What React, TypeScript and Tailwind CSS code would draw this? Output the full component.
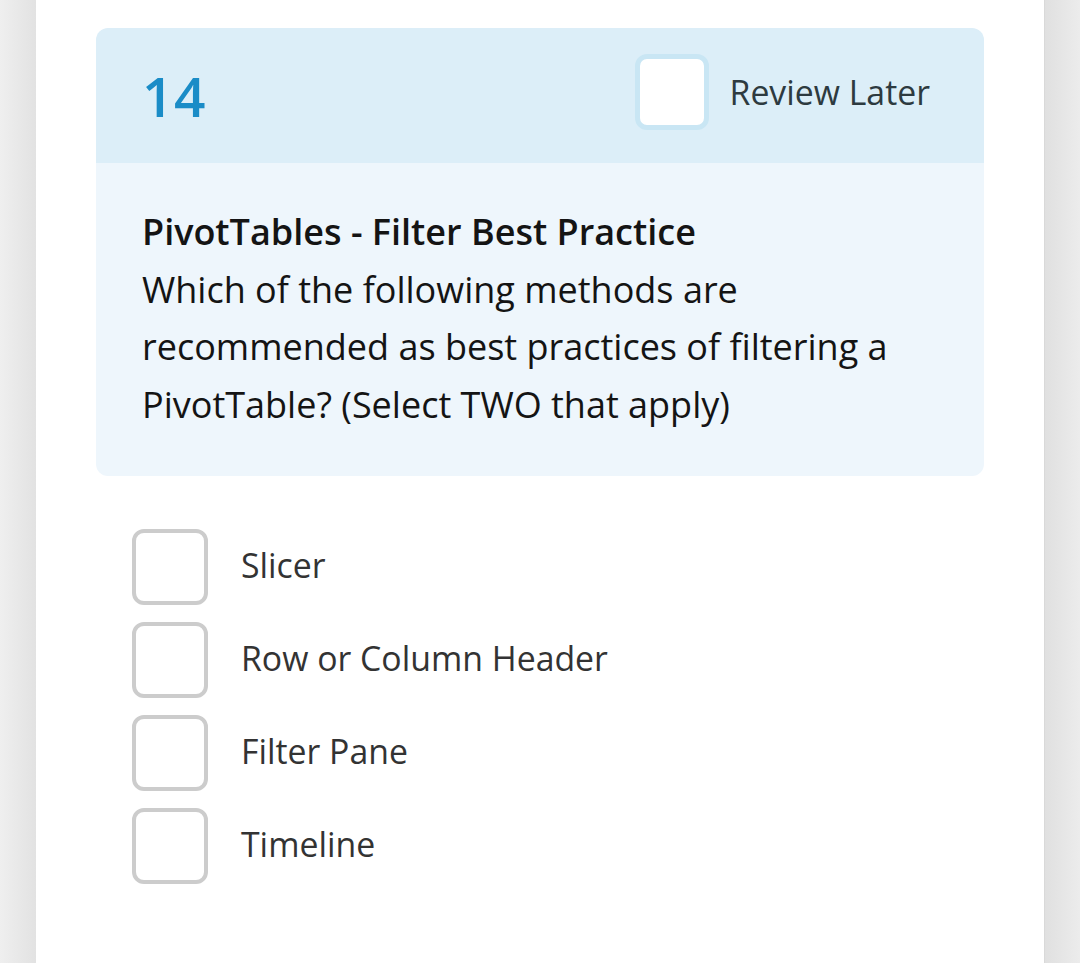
import React from "react";

const options = ["Slicer", "Row or Column Header", "Filter Pane", "Timeline"];

export default function App() {
  return (
    <div
      className="flex h-[963px] w-full overflow-hidden bg-white"
      style={{ fontFamily: '"Open Sans", "Noto Sans", sans-serif' }}
    >
      {/* left gutter */}
      <div className="w-[36px] shrink-0 bg-gradient-to-r from-[#efefef] to-[#e2e2e2]" />

      {/* card */}
      <div className="flex-1 bg-white px-[60px] pt-[28px]">
        <div className="overflow-hidden rounded-[12px]">
          {/* header */}
          <div className="flex h-[135px] items-center justify-between bg-[#dceef8] pl-[46px] pr-[54px]">
            <span className="text-[55px] font-semibold leading-none tracking-[0.5px] text-[#1a8cc7]">
              14
            </span>
            <label className="mb-[7px] flex items-center gap-[21px]">
              <span className="block h-[76px] w-[74px] rounded-[12px] border-[5px] border-[#c9e6f4] bg-white" />
              <span className="text-[33.8px] text-[#2d3a40]">Review Later</span>
            </label>
          </div>

          {/* question */}
          <div className="bg-[#eef6fc] px-[46px] pb-[43px] pt-[40px] text-[36px] leading-[57.6px] text-[#141414]">
            <p className="font-semibold">PivotTables - Filter Best Practice</p>
            <p>
              Which of the following methods are recommended as best practices
              of filtering a PivotTable? (Select TWO that apply)
            </p>
          </div>
        </div>

        {/* options */}
        <div className="mt-[53px] flex flex-col gap-[17px] pl-[36px]">
          {options.map((opt) => (
            <label key={opt} className="flex items-center gap-[33px]">
              <span className="block h-[76px] w-[76px] shrink-0 rounded-[12px] border-[4px] border-[#cccccc] bg-white" />
              <span className="-mt-[4px] text-[33.8px] text-[#333333]">{opt}</span>
            </label>
          ))}
        </div>
      </div>

      {/* right gutter */}
      <div className="w-[36px] shrink-0 border-l border-[#d9d9d9] bg-gradient-to-r from-[#e0e0e0] to-[#ececec]" />
    </div>
  );
}
